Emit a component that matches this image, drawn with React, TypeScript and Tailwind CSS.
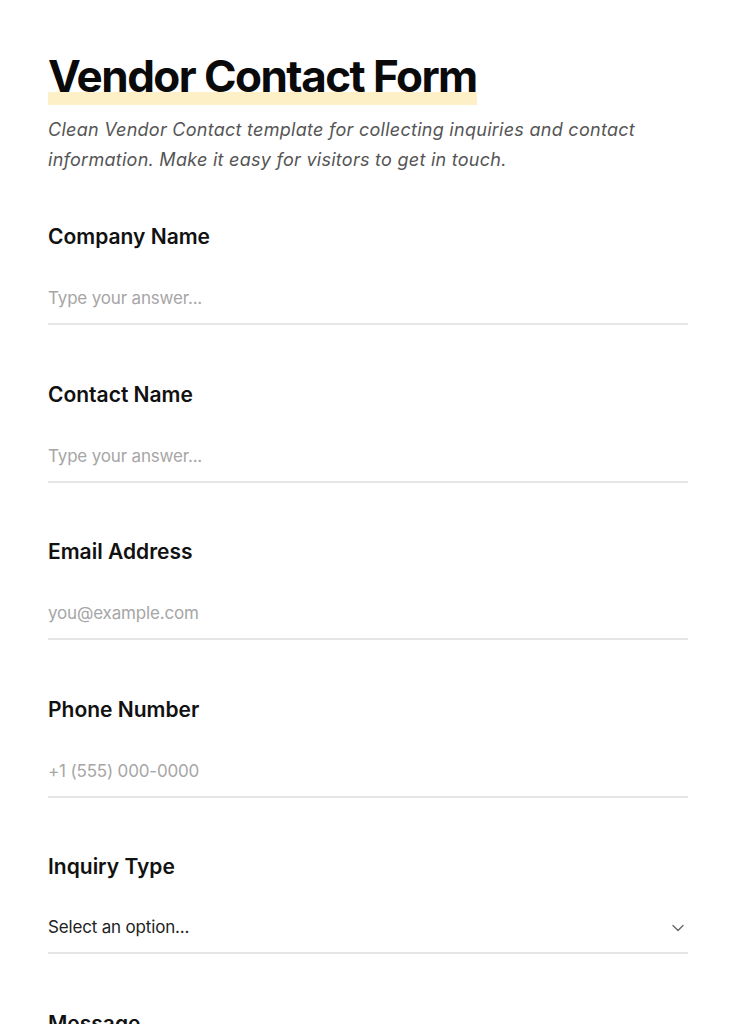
import { ChevronDown } from 'lucide-react';

type Field = {
  label: string;
  placeholder: string;
  type?: 'text' | 'email' | 'tel' | 'select';
};

const fields: Field[] = [
  { label: 'Company Name', placeholder: 'Type your answer...' },
  { label: 'Contact Name', placeholder: 'Type your answer...' },
  { label: 'Email Address', placeholder: 'you@example.com', type: 'email' },
  { label: 'Phone Number', placeholder: '+1 (555) 000-0000', type: 'tel' },
  { label: 'Inquiry Type', placeholder: 'Select an option...', type: 'select' },
  { label: 'Message', placeholder: 'Type your answer...' },
];

function FormField({ field }: { field: Field }) {
  return (
    <div className="flex flex-col">
      <label className="text-[21px] leading-[28px] font-semibold text-[#111]">
        {field.label}
      </label>
      {field.type === 'select' ? (
        <div className="mt-[24px] flex h-[49px] items-center justify-between border-b-2 border-[#e6e6e6] pb-[2px]">
          <span className="text-[17px] tracking-[-0.01em] text-[#222]">{field.placeholder}</span>
          <ChevronDown className="mr-0 h-[20px] w-[20px] text-[#666]" strokeWidth={1.6} />
        </div>
      ) : (
        <input
          type={field.type ?? 'text'}
          placeholder={field.placeholder}
          className="mt-[24px] h-[50px] border-b-2 border-[#e6e6e6] bg-transparent pb-[2px] text-[17px] tracking-[-0.01em] text-[#222] outline-none placeholder:text-[#a6a6a6]"
        />
      )}
    </div>
  );
}

export default function App() {
  return (
    <div className="min-h-screen bg-white px-[48px] pt-[54px] pb-16 font-['Inter',sans-serif]">
      <h1 className="inline-block bg-[linear-gradient(to_top,#fdf0c6_13px,transparent_13px)] pb-[7px] text-[44px] leading-[44px] font-bold tracking-[-0.035em] text-[#0a0a0a]">
        Vendor Contact Form
      </h1>
      <p className="mt-[10px] text-[18px] leading-[30px] tracking-[0.015em] text-[#555] italic">
        Clean Vendor Contact template for collecting inquiries and contact information. Make it easy for visitors to get in touch.
      </p>
      <form className="mt-[48px] flex flex-col gap-[55.5px]">
        {fields.map((field) => (
          <FormField key={field.label} field={field} />
        ))}
      </form>
    </div>
  );
}
